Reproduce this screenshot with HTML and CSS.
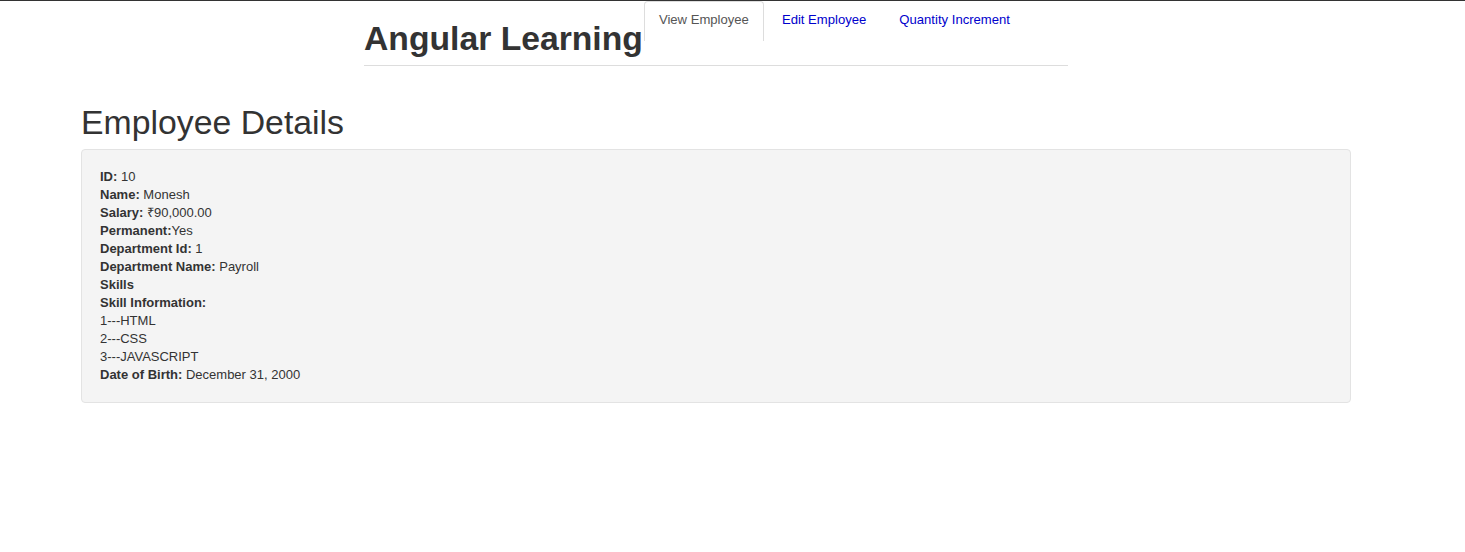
FILE: index.html
```html
<!DOCTYPE html>
<html>
<head>
<meta charset="utf-8">
<title>Angular Learning</title>
<link rel="stylesheet" href="styles.css">
</head>
<body>
<header class="top">
  <h1 class="brand">Angular Learning</h1>
  <nav class="tabs">
    <a class="tab active">View Employee</a>
    <a class="tab">Edit Employee</a>
    <a class="tab">Quantity Increment</a>
  </nav>
</header>
<main class="content">
  <h1 class="title">Employee Details</h1>
  <div class="well">
    <div class="row"><b>ID:</b> 10</div>
    <div class="row"><b>Name:</b> Monesh</div>
    <div class="row"><b>Salary:</b> ₹90,000.00</div>
    <div class="row"><b>Permanent:</b>Yes</div>
    <div class="row"><b>Department Id:</b> 1</div>
    <div class="row"><b>Department Name:</b> Payroll</div>
    <div class="row"><b>Skills</b></div>
    <div class="row"><b>Skill Information:</b></div>
    <div class="row">1---HTML</div>
    <div class="row">2---CSS</div>
    <div class="row">3---JAVASCRIPT</div>
    <div class="row"><b>Date of Birth:</b> December 31, 2000</div>
  </div>
</main>
</body>
</html>
```
FILE: styles.css
```css
html, body {
  margin: 0;
  padding: 0;
  background: #fff;
}
body {
  border-top: 1px solid #333;
  font-family: "Liberation Sans", Arial, Helvetica, sans-serif;
  color: #333;
  font-size: 13px;
}
.top {
  display: flex;
  align-items: flex-start;
  margin-left: 364px;
  width: 704px;
  height: 64px;
  border-bottom: 1px solid #ddd;
}
.brand {
  margin: 18px 0 0 0;
  font-size: 33.7px;
  font-weight: bold;
  line-height: 39px;
  color: #333;
}
.tabs {
  display: flex;
  margin-left: 1px;
}
.tab {
  display: block;
  padding: 0 14px;
  height: 39px;
  line-height: 35px;
  font-size: 13.1px;
  color: #0000cc;
  margin-right: 3px;
  border: 1px solid transparent;
  border-bottom: none;
  border-radius: 4px 4px 0 0;
  cursor: pointer;
}
.tab.active {
  color: #555;
  border-color: #ddd;
  background: #fff;
}
.content {
  margin-left: 81px;
  width: 1270px;
}
.title {
  font-size: 33.8px;
  font-weight: normal;
  line-height: 40px;
  margin: 36px 0 7px 0;
  color: #333;
}
.well {
  background: #f4f4f4;
  border: 1px solid #e3e3e3;
  border-radius: 4px;
  padding: 18px 18px;
  line-height: 18px;
  font-size: 13px;
}
.row b {
  font-weight: bold;
}
```
